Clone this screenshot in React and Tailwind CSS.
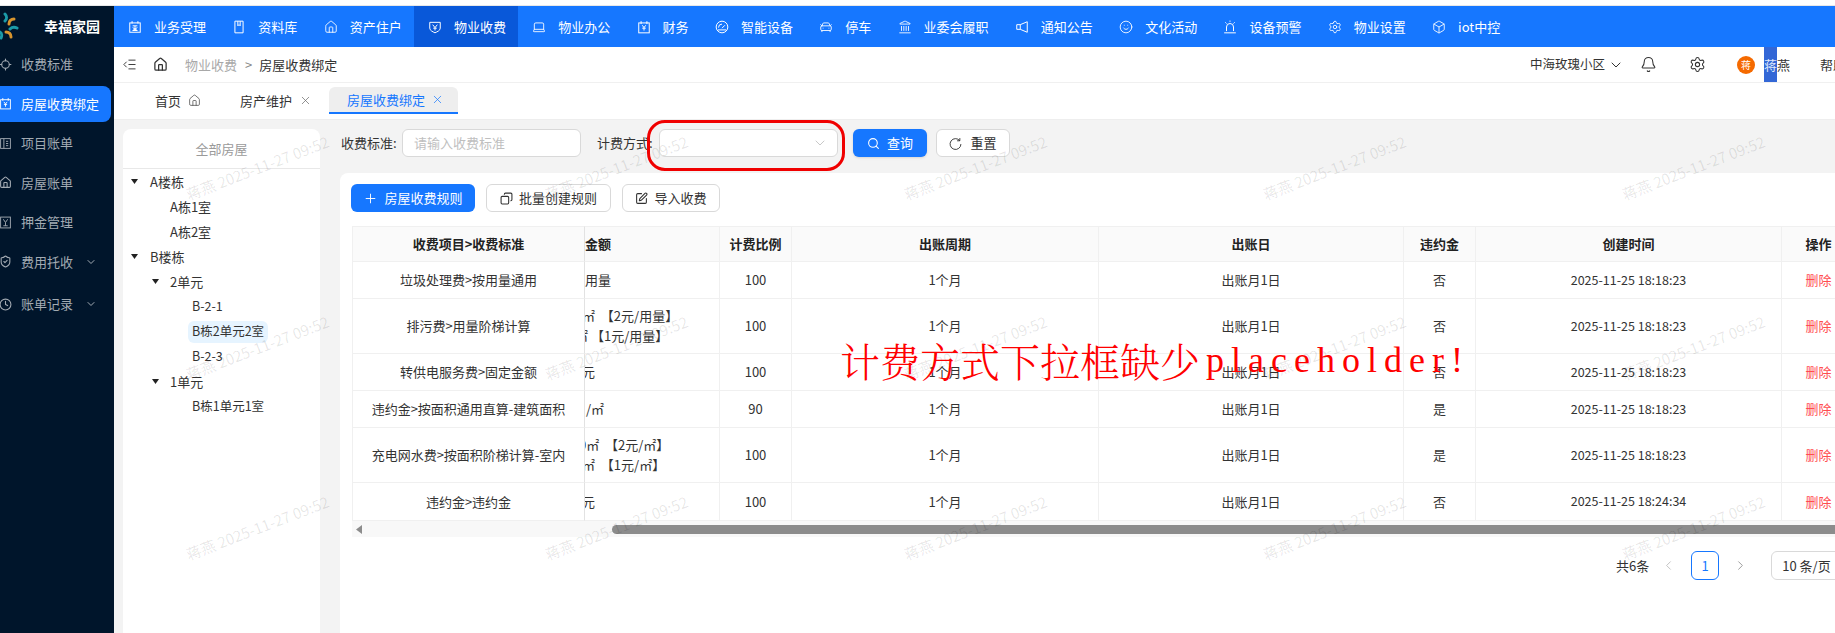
import React from "react";
import { Home, Laptop, CarFront, Landmark, Settings, Box, ChevronDown, ChevronLeft, ChevronRight, X, Plus, Copy, SquarePen, Search, Bell, IndentDecrease, Locate, ShieldCheck, Clock, Smile } from "lucide-react";

const S = ({ size = 15, className = "", children }) => (
  <svg width={size} height={size} viewBox="0 0 24 24" fill="none" stroke="currentColor" strokeWidth="1.7" className={"shrink-0 " + className}>{children}</svg>
);
const Biz = (p) => <S {...p}><rect x="3" y="5" width="18" height="16" /><path d="M7 2v4M17 2v4M8 10h8M12 10v8M8 18h8M8 13l8 5M16 13l-8 5" /></S>;
const Doc = (p) => <S {...p}><path d="M5 2h14v20H5zM10 2v8l2-2 2 2V2" /></S>;
const ShieldY = (p) => <S {...p}><path d="M3 4h18v10c0 4-5 6-9 8-4-2-9-4-9-8z" /><path d="M8 8l4 5 4-5M12 13v5M9 14h6" /></S>;
const CalY = (p) => <S {...p}><rect x="3" y="5" width="18" height="17" /><path d="M7 2v5M17 2v5M9 9l3 4 3-4M12 13v5M9 14h6" /></S>;
const ListBox = (p) => <S {...p}><rect x="3" y="3" width="18" height="18" /><path d="M9 3v18M13 8h4M13 12h4M13 16h4" /></S>;
const Deposit = (p) => <S {...p}><rect x="3" y="2" width="18" height="20" /><path d="M8 6l4 6 4-6M12 12v6M8 18h8" /></S>;
const Dial = (p) => <S {...p}><circle cx="12" cy="12" r="10" /><path d="M6 13a6 6 0 0 1 6-6M12 14l5-5M5 17h14" /></S>;
const Horn = (p) => <S {...p}><path d="M21 3 9 8H3v8h6l12 5z" /><path d="M9 8v8" /></S>;
const Alarm = (p) => <S {...p}><path d="M6 19v-7a6 6 0 0 1 12 0v7M2 22h20M12 1v2M4 4l2 2M20 4l-2 2" /></S>;
const Reset = (p) => <S {...p}><path d="M20 7a10 10 0 1 0 2 6" /><path d="M20 2v5h-5" /></S>;

const nav = [
  ["业务受理", Biz], ["资料库", Doc], ["资产住户", Home], ["物业收费", ShieldY, true], ["物业办公", Laptop],
  ["财务", CalY], ["智能设备", Dial], ["停车", CarFront], ["业委会履职", Landmark], ["通知公告", Horn],
  ["文化活动", Smile], ["设备预警", Alarm], ["物业设置", Settings], ["iot中控", Box],
];

const side = [
  ["收费标准", Locate], ["房屋收费绑定", CalY, "active"], ["项目账单", ListBox], ["房屋账单", Home], ["押金管理", Deposit], ["费用托收", ShieldCheck, "more"], ["账单记录", Clock, "more"],
];

const tree = [
  ["A楼栋", 1, true], ["A栋1室", 2], ["A栋2室", 2], ["B楼栋", 1, true], ["2单元", 2, true], ["B-2-1", 3], ["B栋2单元2室", 3, false, true], ["B-2-3", 3], ["1单元", 2, true], ["B栋1单元1室", 3],
];

const rows = [
  ["垃圾处理费>按用量通用", [["用量", "ml-0"]], "100", "否", "2025-11-25 18:18:23", "h-[37px]"],
  ["排污费>用量阶梯计算", [["㎡  【2元/用量】", "ml-[-3px]"], ["㎡ 【1元/用量】", "ml-[-10px]"]], "100", "否", "2025-11-25 18:18:23", "h-[55px]"],
  ["转供电服务费>固定金额", [["元", "ml-[-3px]"]], "100", "否", "2025-11-25 18:18:23", "h-[37px]"],
  ["违约金>按面积通用直算-建筑面积", [["/㎡", "ml-[1px]"]], "90", "是", "2025-11-25 18:18:23", "h-[37px]"],
  ["充电网水费>按面积阶梯计算-室内", [["0㎡  【2元/㎡】", "ml-[-6px]"], ["㎡  【1元/㎡】", "ml-[-3px]"]], "100", "是", "2025-11-25 18:18:23", "h-[55px]"],
  ["违约金>违约金", [["元", "ml-[-3px]"]], "100", "否", "2025-11-25 18:24:34", "h-[38px]"],
];

const cell = "border-r border-b border-[#f0f0f0] text-center p-0";

export default function App() {
  return (
    <div className="relative flex flex-col w-[1835px] h-[633px] overflow-hidden bg-white text-[13px] text-[#333] font-['Noto_Sans_CJK_SC','Noto_Sans',sans-serif]">
      <div className="h-[6px] shrink-0 bg-white border-b border-[#e8e8e8]" />
      <div className="flex flex-1 min-h-0">
        <aside className="w-[114px] shrink-0 bg-[#00152b] text-[#a3abb3] flex flex-col overflow-hidden">
          <div className="h-[40px] flex items-center shrink-0">
            <svg width="28" height="28" viewBox="0 0 28 28" fill="none" strokeWidth="3" strokeLinecap="round" className="ml-[-9px] shrink-0">
              <path d="M14 2c2 2 2 5 0 7" stroke="#1c9aa8" />
              <path d="M23 7c-3 0-5 2-5 5" stroke="#d9952e" />
              <path d="M26 16c-2-1-5-1-7 1" stroke="#1c9aa8" />
              <path d="M20 25c0-3-2-5-5-5" stroke="#d9952e" />
              <path d="M10 26c1-2 1-5-1-6" stroke="#1c9aa8" />
            </svg>
            <span className="ml-[25px] text-[14px] font-bold text-white whitespace-nowrap">幸福家园</span>
          </div>
          <div className="flex flex-col gap-[3.5px]">
            {side.map(([t, I, k], i) => (
              <div key={t} className={"flex items-center h-[36px] w-[111px] shrink-0 rounded-r-lg " + (k === "active" ? "bg-[#1677ff] text-white " : "") + (i === 6 ? "mt-[3px]" : "")}>
                <I size={13} className="ml-[-1px]" />
                <span className="ml-[9px] whitespace-nowrap">{t}</span>
                {k === "more" && <ChevronDown size={12} className="ml-[12px]" />}
              </div>
            ))}
          </div>
        </aside>

        <main className="flex-1 min-w-0 flex flex-col">
          <header className="h-[41px] shrink-0 flex bg-[#1677ff] text-white">
            {nav.map(([t, I, on]) => (
              <div key={t} className={"flex items-center h-full pl-[14px] pr-[12.3px] gap-[12px] whitespace-nowrap " + (on ? "bg-[#0958d9]" : "")}>
                <I size={14} strokeWidth={1.5} />
                <span>{t}</span>
              </div>
            ))}
          </header>

          <div className="h-[36px] shrink-0 flex items-center border-b border-[#f0f0f0]">
            <IndentDecrease size={15} strokeWidth={1.5} className="ml-[8px]" />
            <Home size={15} strokeWidth={2} className="ml-[16px]" />
            <span className="ml-[17px] text-[#a8a8a8]">物业收费</span>
            <span className="ml-[8px] text-[#888]">&gt;</span>
            <span className="ml-[7px]">房屋收费绑定</span>
            <span className="ml-auto text-[12.5px]">中海玫瑰小区</span>
            <ChevronDown size={16} strokeWidth={1.5} className="ml-[3px] shrink-0" />
            <Bell size={17} strokeWidth={1.5} className="ml-[16.5px] shrink-0" />
            <Settings size={17} strokeWidth={1.5} className="ml-[32px] shrink-0" />
            <span className="ml-[30.5px] w-[18px] h-[18px] shrink-0 rounded-full bg-[#f56a00] text-white text-[10px] flex items-center justify-center">蒋</span>
            <span className="ml-[9px] h-full flex items-center whitespace-nowrap shrink-0">
              <span className="h-full w-[13px] bg-[#3367d6] text-[#dfe7fb] flex items-center overflow-hidden">蒋</span>
              <span>燕</span>
            </span>
            <span className="ml-[30px] w-[15px] overflow-hidden whitespace-nowrap shrink-0">帮助</span>
          </div>

          <div className="h-[37px] shrink-0 flex items-start pt-[4px] border-b border-[#eeeeee]">
            <div className="h-[27px] flex items-center ml-[41px] gap-[7px]"><span>首页</span><Home size={13} strokeWidth={1.5} className="text-[#555]" /></div>
            <div className="h-[27px] flex items-center ml-[39px] gap-[7px]"><span>房产维护</span><X size={13} strokeWidth={1.3} className="text-[#666]" /></div>
            <div className="h-[27px] flex items-center ml-[17px] w-[129px] pl-[18px] gap-[6px] bg-[#eeeeee] rounded-t-md border-b-2 border-[#1677ff] text-[#1677ff]"><span>房屋收费绑定</span><X size={13} strokeWidth={1.3} /></div>
          </div>

          <div className="flex-1 min-h-0 flex bg-[#f3f3f3] pt-[9px]">
            <section className="w-[197px] ml-[9px] shrink-0 bg-white rounded-t-lg">
              <div className="h-[40px] flex items-center justify-center border-b border-[#e8e8e8] text-[#9a9a9a]">全部房屋</div>
              <div>
                {tree.map(([t, l, c, sel]) => (
                  <div key={t} className={"h-[25px] flex items-center " + (l === 1 ? "pl-[8px]" : l === 2 ? "pl-[29px]" : "pl-[69px] text-[12.5px]")}>
                    {c && (
                      <svg width="7" height="5" viewBox="0 0 7 5" className={"shrink-0 " + (l === 1 ? "mr-[12px]" : "mr-[11px]")}><path d="M0 0h7L3.5 5z" fill="#222" /></svg>
                    )}
                    {l === 2 && !c && <span className="w-[18px]" />}
                    <span className={sel ? "bg-[#e6f4ff] rounded-md px-[4px] h-[22px] flex items-center -ml-[4px]" : ""}>{t}</span>
                  </div>
                ))}
              </div>
            </section>

            <section className="flex-1 min-w-0 ml-[20px] flex flex-col">
              <div className="h-[44px] shrink-0 flex items-start pl-[1px]">
                <label className="w-[61px] h-[28px] flex items-center">收费标准:</label>
                <div className="w-[179px] h-[28px] bg-white border border-[#d9d9d9] rounded-md flex items-center pl-[11px] text-[#bfbfbf]">请输入收费标准</div>
                <label className="ml-[16px] w-[62px] h-[28px] flex items-center">计费方式:</label>
                <div className="w-[179px] h-[28px] bg-white border border-[#d9d9d9] rounded-md flex items-center justify-end pr-[9px] text-[#bfbfbf]"><ChevronDown size={16} strokeWidth={1.3} /></div>
                <button className="ml-[15px] w-[74px] h-[28px] bg-[#1677ff] text-white rounded-md flex items-center justify-center gap-[7px] shadow-sm"><Search size={13} /><span>查询</span></button>
                <button className="ml-[9px] w-[74px] h-[28px] bg-white border border-[#d9d9d9] rounded-md flex items-center justify-center gap-[8px]"><Reset size={13} /><span>重置</span></button>
              </div>

              <div className="flex-1 min-h-0 bg-white rounded-tl-lg pt-[11px] pl-[12px] overflow-hidden">
                <div className="flex gap-[11px] h-[28px] -ml-[1px]">
                  <button className="w-[124px] bg-[#1677ff] text-white rounded-md flex items-center justify-center gap-[6px]"><Plus size={15} strokeWidth={1.5} /><span>房屋收费规则</span></button>
                  <button className="w-[125px] bg-white border border-[#d9d9d9] rounded-md flex items-center justify-center gap-[6px]"><Copy size={13} className="-scale-x-100" /><span>批量创建规则</span></button>
                  <button className="w-[98px] bg-white border border-[#d9d9d9] rounded-md flex items-center justify-center gap-[6px]"><SquarePen size={13} /><span>导入收费</span></button>
                </div>

                <table className="mt-[14px] table-fixed border-separate border-spacing-0 w-[1530px]">
                  <colgroup>
                    <col className="w-[233px]" /><col className="w-[135px]" /><col className="w-[72px]" /><col className="w-[307px]" /><col className="w-[305px]" /><col className="w-[72px]" /><col className="w-[306px]" /><col className="w-[100px]" />
                  </colgroup>
                  <thead>
                    <tr className="h-[36px] bg-[#fafafa] font-semibold text-[#222]">
                      <th className={cell + " border-t border-l font-semibold border-r-[#e2e2e2]"}>收费项目&gt;收费标准</th>
                      <th className={cell + " border-t font-semibold text-left"}>金额</th>
                      <th className={cell + " border-t font-semibold"}>计费比例</th>
                      <th className={cell + " border-t font-semibold"}>出账周期</th>
                      <th className={cell + " border-t font-semibold"}>出账日</th>
                      <th className={cell + " border-t font-semibold"}>违约金</th>
                      <th className={cell + " border-t font-semibold"}>创建时间</th>
                      <th className={cell + " border-t font-semibold pr-[26px]"}>操作</th>
                    </tr>
                  </thead>
                  <tbody>
                    {rows.map((r, i) => (
                      <tr key={i} className={r[5]}>
                        <td className={cell + " border-l border-r-[#e2e2e2]"}>{r[0]}</td>
                        <td className={cell + " text-left overflow-hidden whitespace-pre"}>
                          {r[1].map(([a, m]) => (<div key={a} className={"leading-[20px] " + m}>{a}</div>))}
                        </td>
                        <td className={cell}>{r[2]}</td>
                        <td className={cell}>1个月</td>
                        <td className={cell}>出账月1日</td>
                        <td className={cell}>{r[3]}</td>
                        <td className={cell + " text-[12.5px]"}>{r[4]}</td>
                        <td className={cell + " pr-[26px] text-[#ff4d4f]"}>删除</td>
                      </tr>
                    ))}
                  </tbody>
                </table>

                <div className="h-[16px] w-[1530px] bg-[#f8f8f8] flex items-center">
                  <svg width="6" height="9" viewBox="0 0 6 9" className="ml-[4px] shrink-0"><path d="M6 0v9L0 4.500z" fill="#8c8c8c" /></svg>
                  <div className="ml-[250px] h-[9px] flex-1 rounded-full bg-[#8c8c8c]" />
                </div>

                <div className="mt-[14px] flex items-center h-[29px] w-[1700px] pl-[1264px] whitespace-nowrap">
                  <span>共6条</span>
                  <ChevronLeft size={15} strokeWidth={1.3} className="ml-[12px] text-[#b5b5b5] shrink-0" />
                  <span className="ml-[15px] w-[28px] h-[29px] border border-[#1677ff] rounded-md text-[#1677ff] flex items-center justify-center shrink-0">1</span>
                  <ChevronRight size={15} strokeWidth={1.3} className="ml-[14px] text-[#888] shrink-0" />
                  <span className="ml-[23px] w-[90px] h-[29px] border border-[#d9d9d9] rounded-md flex items-center pl-[10px] shrink-0">10 条/页</span>
                </div>
              </div>
            </section>
          </div>
        </main>
      </div>

      {/* watermark */}
      <div className="absolute left-[78px] top-[78px] grid grid-cols-[repeat(5,359px)] auto-rows-[180px] pointer-events-none">
        {Array.from({ length: 15 }).map((_, i) => (
          <div key={i} className="flex items-center justify-center">
            <span className="rotate-[-21deg] whitespace-nowrap text-[15px] text-black/10">蒋燕 2025-11-27 09:52</span>
          </div>
        ))}
      </div>

      {/* annotation */}
      <div className="absolute left-[647px] top-[120px] w-[198px] h-[51px] border-[3px] border-[#f00000] rounded-[18px] pointer-events-none" />
      <div className="absolute left-[840px] top-[336px] flex items-center h-[48px] whitespace-nowrap text-[#ff0000] pointer-events-none">
        <span className="text-[40px] font-light font-['Noto_Serif_CJK_SC','AR_PL_UMing_CN','Noto_Sans_CJK_SC',serif]">计费方式下拉框缺少</span>
        <span className="ml-[6px] text-[36px] tracking-[7px] font-['Liberation_Serif',serif]">placeholder!</span>
      </div>
    </div>
  );
}
